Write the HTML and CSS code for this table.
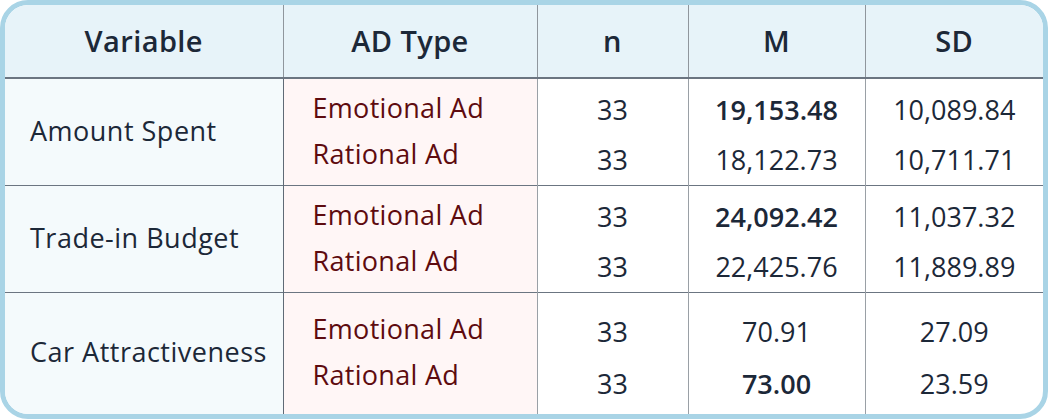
FILE: index.html
```html
<!DOCTYPE html>
<html>
<head>
<meta charset="utf-8">
<link rel="stylesheet" href="styles.css">
</head>
<body>
<div class="frame">
<table class="stats">
  <colgroup>
    <col class="c-var"><col class="c-type"><col class="c-n"><col class="c-m"><col class="c-sd">
  </colgroup>
  <thead>
    <tr><th>Variable</th><th>AD Type</th><th>n</th><th>M</th><th>SD</th></tr>
  </thead>
  <tbody>
    <tr class="g1">
      <td class="var">Amount Spent</td>
      <td class="type"><div>Emotional Ad</div><div>Rational Ad</div></td>
      <td class="num"><div>33</div><div>33</div></td>
      <td class="num"><div class="hi">19,153.48</div><div>18,122.73</div></td>
      <td class="num"><div>10,089.84</div><div>10,711.71</div></td>
    </tr>
    <tr class="g2">
      <td class="var">Trade-in Budget</td>
      <td class="type"><div>Emotional Ad</div><div>Rational Ad</div></td>
      <td class="num"><div>33</div><div>33</div></td>
      <td class="num"><div class="hi">24,092.42</div><div>22,425.76</div></td>
      <td class="num"><div>11,037.32</div><div>11,889.89</div></td>
    </tr>
    <tr class="g3">
      <td class="var">Car Attractiveness</td>
      <td class="type"><div>Emotional Ad</div><div>Rational Ad</div></td>
      <td class="num"><div>33</div><div>33</div></td>
      <td class="num"><div>70.91</div><div class="hi">73.00</div></td>
      <td class="num"><div>27.09</div><div>23.59</div></td>
    </tr>
  </tbody>
</table>
</div>
</body>
</html>
```
FILE: styles.css
```css
html, body {
  margin: 0;
  padding: 0;
  background: #ffffff;
}
body {
  font-family: "Open Sans", Lato, sans-serif;
  font-variant-ligatures: none;
  color: #1c2838;
}
.frame {
  width: 1048px;
  height: 419px;
  box-sizing: border-box;
  border: 5px solid #a9d4e6;
  border-radius: 28px;
  overflow: hidden;
  background: #fff;
}
.stats {
  width: 100%;
  border-collapse: collapse;
  table-layout: fixed;
}
.c-var { width: 278px; }
.c-type { width: 254px; }
.c-n { width: 151px; }
.c-m { width: 177px; }
.c-sd { width: auto; }

th {
  height: 70px;
  background: #e7f3f9;
  font-size: 29px;
  font-weight: 600;
  letter-spacing: 0.4px;
  color: #1c2838;
  text-align: center;
  border-bottom: 2px solid #6b7581;
  border-left: 1px solid #8f969d;
  padding: 0 0 2px;
}
th:first-child { border-left: none; }
td {
  padding: 0;
  border-left: 1px solid #9aa0a6;
  border-top: 1px solid #6b7581;
  vertical-align: middle;
}
td:first-child { border-left: none; }
tbody tr:first-child td { border-top: none; }
td.type { border-left: 1px solid #5f6a76; }
.g1 { height: 106px; }
.g2 { height: 107px; }
.g3 { height: 124px; }

.var {
  background: #f4fafc;
  font-size: 27px;
  letter-spacing: 0.5px;
  padding-left: 25px;
  padding-bottom: 4px;
}
.type {
  background: #fff6f6;
  color: #5e0b0f;
  font-size: 27px;
  letter-spacing: 0.3px;
  line-height: 46px;
  padding-left: 29px;
  padding-bottom: 3px;
}
.num {
  text-align: center;
  font-size: 27px;
  line-height: 50px;
  padding-top: 6px;
}
.g3 .type, .g3 .var { padding-bottom: 6px; }
.g3 .num { padding-top: 6px; line-height: 52px; }
.hi { font-weight: 600; }
```
